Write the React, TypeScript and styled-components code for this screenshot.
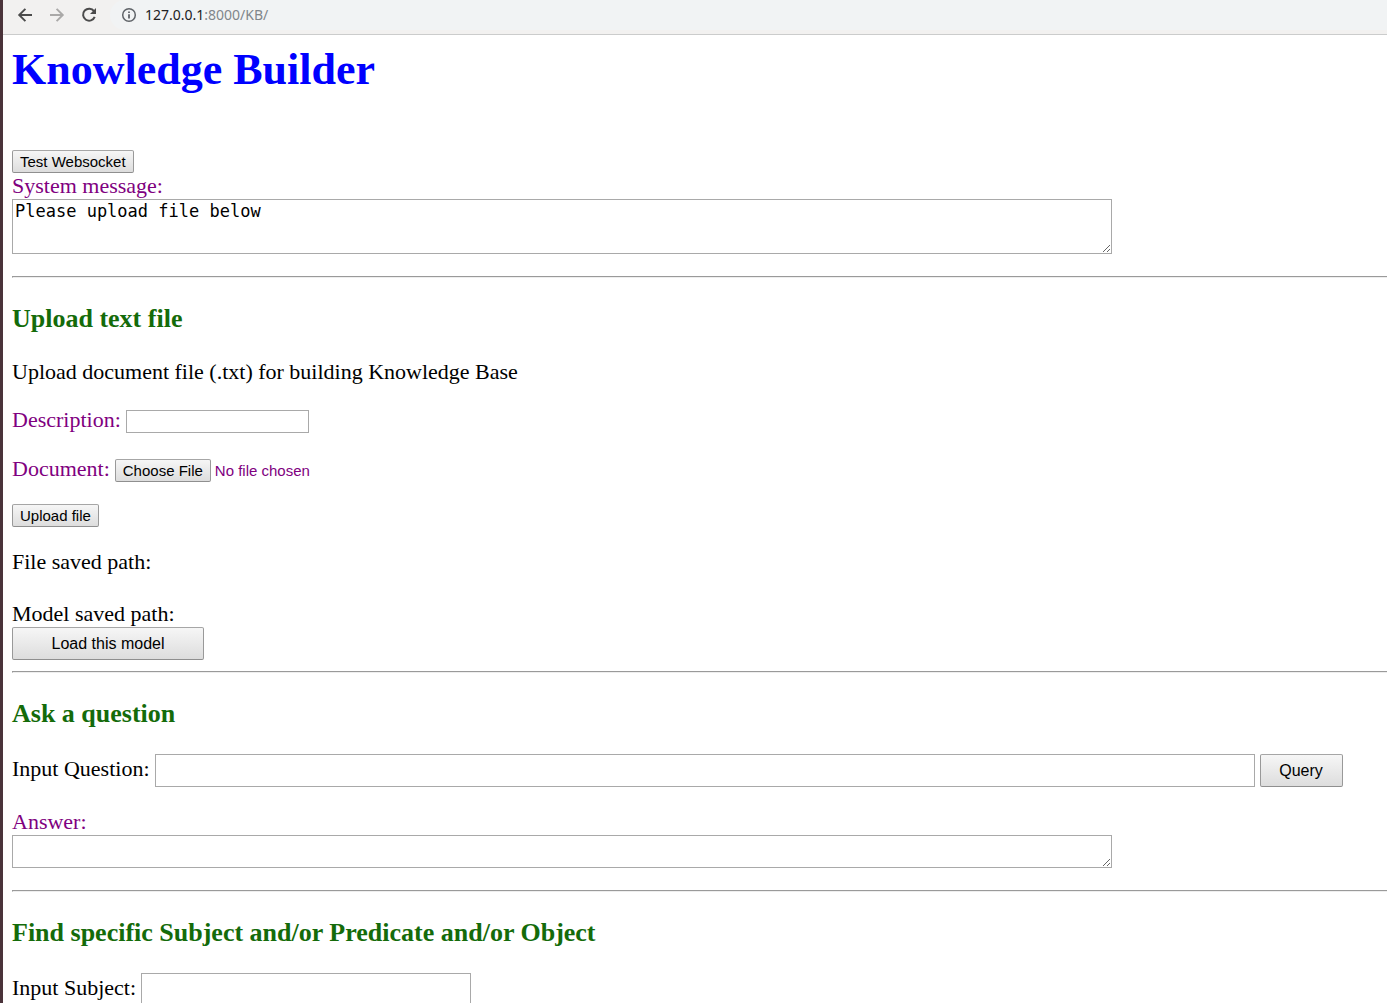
import React from "react";
import styled, { createGlobalStyle } from "styled-components";

const GlobalStyle = createGlobalStyle`
  *, *::before, *::after { box-sizing: border-box; }
  body { margin: 0; background: #fff; }
`;

const Window = styled.div`
  display: flex;
  flex-direction: column;
  height: 100vh;
  overflow: hidden;
  border-left: 3px solid #4a333a;
`;

const Toolbar = styled.header`
  display: flex;
  align-items: flex-start;
  gap: 10px;
  flex: none;
  height: 35px;
  padding-left: 11px;
  background: #f2f1f0;
  border-bottom: 1px solid #cbcccc;
`;

const NavButton = styled.button`
  display: grid;
  place-items: center;
  width: 22px;
  height: 30px;
  padding: 0;
  border: 0;
  background: none;
  color: #4b4b4b;

  &:disabled {
    color: #aaa9a8;
  }
`;

const AddressBar = styled.div`
  display: flex;
  align-items: center;
  gap: 8px;
  flex: 1;
  height: 30px;
  padding-left: 11px;
  border-radius: 15px 0 0 15px;
  background: #f1f3f4;
  color: #5f6368;
`;

const Address = styled.a`
  font: 14px/20px "Noto Sans", "Open Sans", sans-serif;
  color: #80868b;
  text-decoration: none;
`;

const Host = styled.span`
  color: #202124;
`;

const Page = styled.main`
  flex: 1;
  min-height: 0;
  overflow: hidden;
  padding: 10px 0 0 9px;
  font: 22px/25px "Liberation Serif", "Times New Roman", serif;
  color: #000;
`;

const Title = styled.h1`
  margin: 0 0 55px;
  font-size: 44px;
  line-height: 50px;
  color: #00f;
`;

const Heading = styled.h2`
  margin: 0;
  font-size: 26px;
  line-height: 27px;
  color: #146b0a;
`;

const Section = styled.section`
  display: flex;
  flex-direction: column;
  align-items: flex-start;
  gap: 27px;
`;

const Status = styled(Section)`
  gap: 0;
`;

const Form = styled.form`
  display: flex;
  flex-direction: column;
  align-items: flex-start;
  gap: 22px;
`;

const Fields = styled.div`
  display: flex;
  flex-direction: column;
  align-items: flex-start;
  gap: 23px;
`;

const Row = styled.div`
  display: flex;
  align-items: baseline;
  gap: 5px;
`;

const Stack = styled.div`
  display: flex;
  flex-direction: column;
  align-items: flex-start;
  gap: 1px;
  max-width: 100%;
`;

const Text = styled.p`
  margin: 0;
`;

const Label = styled.label<{ $accent?: boolean }>`
  color: ${(p) => (p.$accent ? "#800080" : "#000")};
  white-space: nowrap;
`;

const Divider = styled.hr<{ $above: number }>`
  height: 2px;
  margin: ${(p) => p.$above}px 0 27px;
  border: 1px solid;
  border-color: #9a9a9a #eee #eee #9a9a9a;
  border-right: 0;
`;

const Button = styled.button<{ $width?: number }>`
  width: ${(p) => (p.$width ? `${p.$width}px` : "auto")};
  height: ${(p) => (p.$width ? 33 : 23)}px;
  padding: 0 7px;
  border: 1px solid #999;
  border-color: #a6a6a6 #999 #8f8f8f;
  border-radius: 2px;
  background: linear-gradient(#f6f6f6, #ddd);
  font: ${(p) => (p.$width ? 16 : 15)}px "Liberation Sans", Arial, sans-serif;
  color: #000;
`;

const TextBox = styled.input<{ $width: number; $tall?: boolean }>`
  width: ${(p) => p.$width}px;
  height: ${(p) => (p.$tall ? 33 : 23)}px;
  padding: 1px 2px;
  border: 1px solid #a9a9a9;
  font: ${(p) => (p.$tall ? 16 : 15)}px "Liberation Sans", Arial, sans-serif;
`;

const FileBox = styled.input`
  height: 23px;
  font: 15px "Liberation Sans", Arial, sans-serif;
  color: #800080;

  &::file-selector-button {
    height: 23px;
    margin: 0 4px 0 0;
    padding: 0 7px;
    border: 1px solid #999;
    border-color: #a6a6a6 #999 #8f8f8f;
    border-radius: 2px;
    background: linear-gradient(#f6f6f6, #ddd);
    font: 15px "Liberation Sans", Arial, sans-serif;
    color: #000;
  }
`;

const MessageBox = styled.textarea<{ $height: number }>`
  display: block;
  width: 1100px;
  max-width: 100%;
  height: ${(p) => p.$height}px;
  padding: 2px;
  border: 1px solid #a9a9a9;
  overflow: auto;
  font: 17px/19px "DejaVu Sans Mono", monospace;
  color: #000;
`;

const ArrowIcon = ({ flip = false }: { flip?: boolean }) => (
  <svg width="16" height="16" viewBox="0 0 16 16" fill="none" stroke="currentColor" strokeWidth="1.9">
    <path d={flip ? "M1 8H13.5M7.6 1.8L13.8 8L7.6 14.2" : "M15 8H2.5M8.4 1.8L2.2 8L8.4 14.2"} />
  </svg>
);

const ReloadIcon = () => (
  <svg width="16" height="16" viewBox="0 0 16 16">
    <path d="M13 4.2A6 6 0 1 0 13.7 9.8" fill="none" stroke="currentColor" strokeWidth="2" />
    <path d="M15 1V7H9Z" fill="currentColor" />
  </svg>
);

const InfoIcon = () => (
  <svg width="16" height="16" viewBox="0 0 16 16" fill="none" stroke="currentColor">
    <circle cx="8" cy="8" r="6.3" strokeWidth="1.5" />
    <path d="M8 7.2V11.6M8 4.4V6" strokeWidth="1.8" />
  </svg>
);

const keepPage = (e: React.FormEvent) => e.preventDefault();

export default function App() {
  return (
    <Window>
      <GlobalStyle />
      <Toolbar>
        <NavButton type="button" aria-label="Back"><ArrowIcon /></NavButton>
        <NavButton type="button" aria-label="Forward" disabled><ArrowIcon flip /></NavButton>
        <NavButton type="button" aria-label="Reload"><ReloadIcon /></NavButton>
        <AddressBar>
          <InfoIcon />
          <Address href="#"><Host>127.0.0.1</Host>:8000/KB/</Address>
        </AddressBar>
      </Toolbar>
      <Page>
        <Title>Knowledge Builder</Title>
        <Status>
          <Button type="button">Test Websocket</Button>
          <Stack>
            <Label htmlFor="message" $accent>System message:</Label>
            <MessageBox id="message" $height={55} defaultValue="Please upload file below" />
          </Stack>
        </Status>
        <Divider $above={22} />
        <Section>
          <Heading>Upload text file</Heading>
          <Form onSubmit={keepPage}>
            <Fields>
              <Text>Upload document file (.txt) for building Knowledge Base</Text>
              <Row>
                <Label htmlFor="description" $accent>Description:</Label>
                <TextBox id="description" type="text" $width={183} />
              </Row>
              <Row>
                <Label htmlFor="document" $accent>Document:</Label>
                <FileBox id="document" type="file" />
              </Row>
            </Fields>
            <Button type="submit">Upload file</Button>
            <Text>File saved path:</Text>
          </Form>
          <Stack>
            <Text>Model saved path:</Text>
            <Button type="button" $width={192}>Load this model</Button>
          </Stack>
        </Section>
        <Divider $above={11} />
        <Section>
          <Heading>Ask a question</Heading>
          <Form onSubmit={keepPage}>
            <Row>
              <Label htmlFor="question">Input Question:</Label>
              <TextBox id="question" type="text" $width={1100} $tall />
              <Button type="submit" $width={83}>Query</Button>
            </Row>
            <Stack>
              <Label htmlFor="answer" $accent>Answer:</Label>
              <MessageBox id="answer" $height={33} />
            </Stack>
          </Form>
        </Section>
        <Divider $above={22} />
        <Section>
          <Heading>Find specific Subject and/or Predicate and/or Object</Heading>
          <Form onSubmit={keepPage}>
            <Row>
              <Label htmlFor="subject">Input Subject:</Label>
              <TextBox id="subject" type="text" $width={330} $tall />
            </Row>
          </Form>
        </Section>
      </Page>
    </Window>
  );
}
